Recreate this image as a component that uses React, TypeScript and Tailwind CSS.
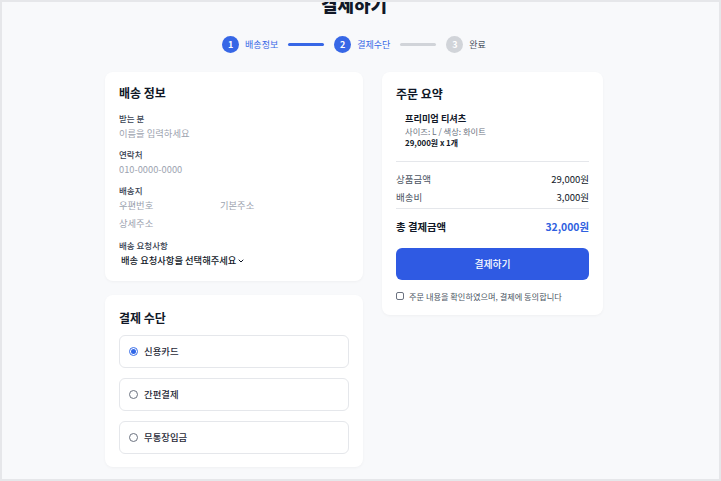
import { ChevronDown } from "lucide-react";

const font = { fontFamily: '"Noto Sans CJK KR", "Noto Sans", sans-serif' };

function Step({ n, label, active }: { n: number; label: string; active: boolean }) {
  return (
    <div className="flex items-center gap-[6px]">
      <div
        className={
          "w-[17px] h-[17px] rounded-full flex items-center justify-center text-[9px] font-semibold text-white " +
          (active ? "bg-[#3767e6]" : "bg-[#d1d4d9]")
        }
      >
        {n}
      </div>
      <span className={"text-[9px] leading-none " + (active ? "text-[#3767e6]" : "text-[#4b5563]")}>{label}</span>
    </div>
  );
}

function Field({ label, placeholder }: { label: string; placeholder: string }) {
  return (
    <div className="flex flex-col">
      <label className="text-[8.5px] leading-[14px] font-medium text-[#374151]">{label}</label>
      <input
        placeholder={placeholder}
        className="h-[16px] text-[9.3px] leading-[16px] outline-none bg-transparent placeholder:text-[#9ca3af]"
      />
    </div>
  );
}

function PayOption({ label, checked }: { label: string; checked?: boolean }) {
  return (
    <div className="h-[33px] rounded-[6px] border border-[#e5e7eb] flex items-center pl-[9px] gap-[6px]">
      {checked ? (
        <div className="w-[9px] h-[9px] rounded-full border border-[#3b6fe8] bg-white flex items-center justify-center">
          <div className="w-[5px] h-[5px] rounded-full bg-[#2f66e8]" />
        </div>
      ) : (
        <div className="w-[9px] h-[9px] rounded-full border border-[#6b7280] bg-white" />
      )}
      <span className="text-[9.4px] font-medium text-[#1f2937]">{label}</span>
    </div>
  );
}

export default function App() {
  return (
    <div style={font} className="w-full h-screen border-2 border-[#e6e7ea] bg-[#f8f9fb] overflow-hidden text-[#111827]">
      <div className="flex flex-col items-center pr-[13px]">
        <h1 className="-mt-[7px] text-[18px] leading-[18px] font-extrabold">결제하기</h1>

        <div className="mt-[23px] flex items-center gap-[10px]">
          <Step n={1} label="배송정보" active />
          <div className="w-[36px] h-[3px] rounded-full bg-[#3767e6]" />
          <Step n={2} label="결제수단" active />
          <div className="w-[36px] h-[3px] rounded-full bg-[#d1d4d9]" />
          <Step n={3} label="완료" active={false} />
        </div>

        <div className="mt-[19px] flex items-start gap-[19px]">
          <div className="w-[258px] flex flex-col gap-[14px]">
            <section className="bg-white rounded-[8px] shadow-[0_1px_3px_rgba(0,0,0,0.04)] px-[14px] pt-[11px] pb-[11px]">
              <h2 className="text-[12px] leading-[20px] font-bold">배송 정보</h2>
              <div className="mt-[8px] flex flex-col gap-[6px]">
                <Field label="받는 분" placeholder="이름을 입력하세요" />
                <Field label="연락처" placeholder="010-0000-0000" />
                <div className="flex flex-col">
                  <label className="text-[8.5px] leading-[14px] font-medium text-[#374151]">배송지</label>
                  <div className="flex">
                    <input
                      placeholder="우편번호"
                      className="w-[101px] h-[16px] text-[9.3px] outline-none bg-transparent placeholder:text-[#9ca3af]"
                    />
                    <input
                      placeholder="기본주소"
                      className="flex-1 min-w-0 h-[16px] text-[9.3px] outline-none bg-transparent placeholder:text-[#9ca3af]"
                    />
                  </div>
                  <input
                    placeholder="상세주소"
                    className="mt-[2px] h-[16px] text-[9.3px] outline-none bg-transparent placeholder:text-[#9ca3af]"
                  />
                </div>
                <div className="flex flex-col mt-[1px]">
                  <label className="text-[8.5px] leading-[14px] font-medium text-[#374151]">배송 요청사항</label>
                  <div className="h-[18px] pl-[2px] flex items-center gap-[1px] text-[9.3px] font-medium text-[#111827]">
                    <span>배송 요청사항을 선택해주세요</span>
                    <ChevronDown size={8} strokeWidth={3} />
                  </div>
                </div>
              </div>
            </section>

            <section className="bg-white rounded-[8px] shadow-[0_1px_3px_rgba(0,0,0,0.04)] px-[14px] pt-[13px] pb-[13px]">
              <h2 className="text-[12px] leading-[20px] font-bold">결제 수단</h2>
              <div className="mt-[7px] flex flex-col gap-[10px]">
                <PayOption label="신용카드" checked />
                <PayOption label="간편결제" />
                <PayOption label="무통장입금" />
              </div>
            </section>
          </div>

          <section className="w-[221px] bg-white rounded-[8px] shadow-[0_1px_3px_rgba(0,0,0,0.04)] px-[14px] pt-[12px] pb-[12px]">
            <h2 className="text-[12px] leading-[20px] font-bold">주문 요약</h2>
            <div className="mt-[7px] pl-[9px] flex flex-col">
              <span className="text-[9.2px] leading-[14px] font-bold">프리미엄 티셔츠</span>
              <span className="text-[8.3px] leading-[12px] text-[#6b7280]">사이즈: L / 색상: 화이트</span>
              <span className="text-[7.9px] leading-[11px] font-semibold">29,000원 x 1개</span>
            </div>
            <div className="mt-[13px] border-t border-[#e5e7eb]" />
            <div className="mt-[9px] flex flex-col gap-[2px] text-[9.5px] leading-[16px]">
              <div className="flex justify-between">
                <span className="text-[#4b5563]">상품금액</span>
                <span>29,000원</span>
              </div>
              <div className="flex justify-between">
                <span className="text-[#4b5563]">배송비</span>
                <span>3,000원</span>
              </div>
            </div>
            <div className="mt-[3px] border-t border-[#e5e7eb]" />
            <div className="mt-[9px] flex justify-between items-center text-[10.4px] leading-[18px] font-bold">
              <span>총 결제금액</span>
              <span className="text-[#2f5fe0]">32,000원</span>
            </div>
            <button className="mt-[12px] w-full h-[32px] rounded-[6px] bg-[#2f5ae3] text-white text-[9.8px] font-medium">
              결제하기
            </button>
            <div className="mt-[9px] flex items-center gap-[5px] h-[14px]">
              <div className="w-[8px] h-[8px] rounded-[2px] border border-[#6b7280]" />
              <span className="text-[8.2px] text-[#4b5563]">주문 내용을 확인하였으며, 결제에 동의합니다</span>
            </div>
          </section>
        </div>
      </div>
    </div>
  );
}
